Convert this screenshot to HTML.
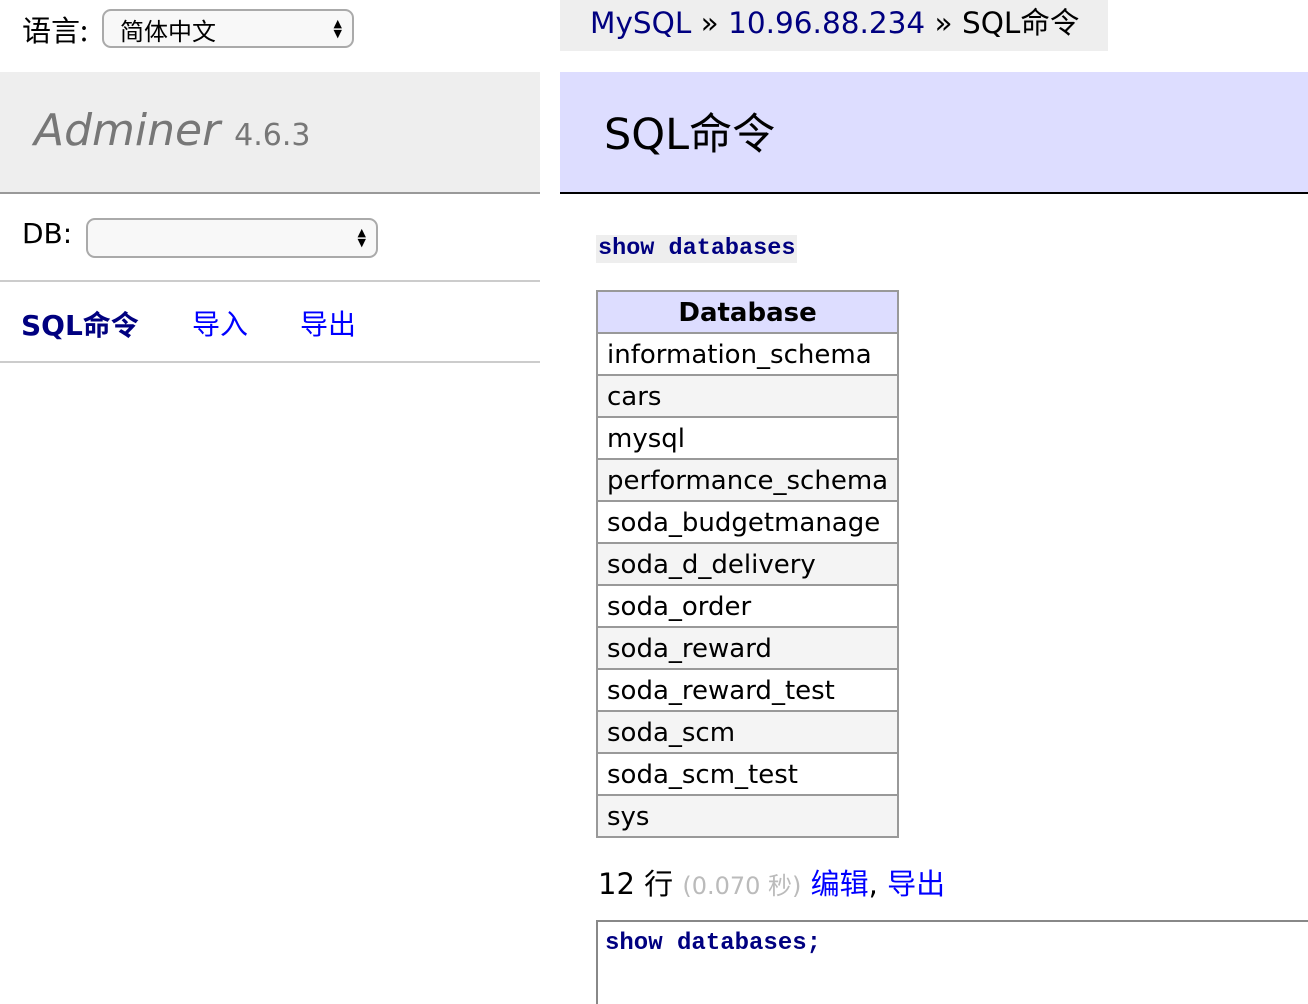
<!DOCTYPE html>
<html><head><meta charset="utf-8"><style>
*{margin:0;padding:0;box-sizing:border-box}
html,body{width:1308px;height:1004px;overflow:hidden}
body{background:#fff;position:relative;font-family:"DejaVu Sans","Noto Sans CJK SC",sans-serif;font-size:26px;color:#000}
.a{position:absolute;white-space:nowrap}
.sel{position:absolute;border:2px solid #aaa;border-radius:9px;background:#f8f8f8}
.arr{position:absolute;right:10px;top:50%;transform:translateY(-50%);font-size:11px;line-height:10px;text-align:center}
.code{font-family:"Liberation Mono",monospace;font-weight:bold;color:#000080;font-size:24px}
table{position:absolute;left:596px;top:290px;border-collapse:collapse;width:301px}
td,th{border:2px solid #999;height:42px;padding:1px 9px 0;font-weight:normal;text-align:left;font-size:26px}
th{background:#ddf;font-weight:bold;text-align:center}
tr:nth-child(odd) td{background:#f4f4f4}
a{color:#00f;text-decoration:none}
</style></head><body>
<div class="a" style="left:22px;top:8px;font-family:'Noto Sans CJK SC',sans-serif;font-size:29px">语言:</div>
<div class="sel" style="left:102px;top:9px;width:252px;height:39px"><span class="a" style="left:16px;top:1px;font-family:'Noto Sans CJK SC',sans-serif;font-size:24px">简体中文</span><div class="arr">▲<br>▼</div></div>
<div class="a" style="left:0;top:72px;width:540px;height:122px;background:#eee;border-bottom:2px solid #999"></div>
<div class="a" style="left:34px;top:105px;color:#777;font-size:44px;font-style:italic">Adminer <span style="font-style:normal;font-size:30px">4.6.3</span></div>
<div class="a" style="left:22px;top:217px;font-size:28px">DB:</div>
<div class="sel" style="left:86px;top:218px;width:292px;height:40px"><div class="arr">▲<br>▼</div></div>
<div class="a" style="left:0;top:280px;width:540px;height:2px;background:#ccc"></div>
<div class="a" style="left:21px;top:304px;font-weight:bold;color:#000080;font-size:28px">SQL命令</div>
<div class="a" style="left:192px;top:303px;color:#00f;font-family:'Noto Sans CJK SC',sans-serif;font-size:28px">导入</div>
<div class="a" style="left:300px;top:303px;color:#00f;font-family:'Noto Sans CJK SC',sans-serif;font-size:28px">导出</div>
<div class="a" style="left:0;top:361px;width:540px;height:2px;background:#ccc"></div>

<div class="a" style="left:560px;top:0;width:548px;height:51px;background:#eee"></div>
<div class="a" style="left:590px;top:0px;font-size:29.5px"><span style="color:#000080">MySQL</span> » <span style="color:#000080">10.96.88.234</span> » SQL命令</div>
<div class="a" style="left:560px;top:72px;width:748px;height:122px;background:#ddf;border-bottom:2px solid #000"></div>
<div class="a" style="left:604px;top:100px;font-size:43px">SQL命令</div>
<div class="a code" style="left:596px;top:235px;background:#eee;padding:0 2px;line-height:28px;font-size:23.5px">show databases</div>
<table>
<tr><th>Database</th></tr>
<tr><td>information_schema</td></tr>
<tr><td>cars</td></tr>
<tr><td>mysql</td></tr>
<tr><td>performance_schema</td></tr>
<tr><td>soda_budgetmanage</td></tr>
<tr><td>soda_d_delivery</td></tr>
<tr><td>soda_order</td></tr>
<tr><td>soda_reward</td></tr>
<tr><td>soda_reward_test</td></tr>
<tr><td>soda_scm</td></tr>
<tr><td>soda_scm_test</td></tr>
<tr><td>sys</td></tr>
</table>
<div class="a" style="left:598px;top:861px;font-size:29px">12 行 <span style="color:#bbb;font-size:24px">(0.070 秒)</span> <a>编辑</a>, <a>导出</a></div>
<div class="a" style="left:596px;top:920px;width:712px;height:84px;border:2px solid #888;border-bottom:none;border-right:none"></div>
<div class="a code" style="left:605px;top:930px">show databases;</div>
</body></html>
